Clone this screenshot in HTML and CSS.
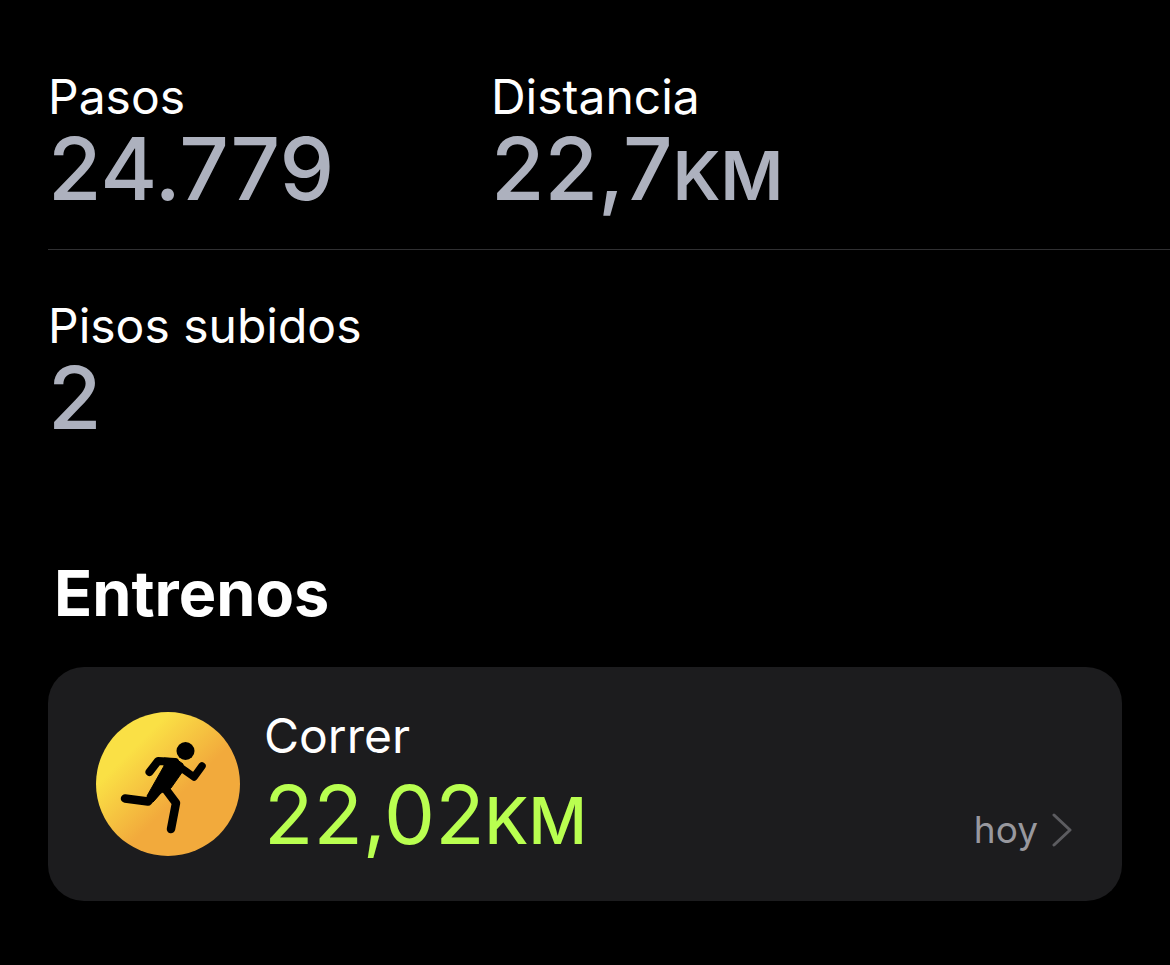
FILE: index.html
```html
<!DOCTYPE html>
<html lang="es">
  <head>
    <meta charset="UTF-8" />
    <meta name="viewport" content="width=device-width, initial-scale=1.0" />
    <title>Actividad</title>
    <link rel="stylesheet" href="styles.css">
  </head>
  <body>
    <main class="activity">
      <dl class="stats">
        <div class="stats-row">
          <div class="stat">
            <dt class="label">Pasos</dt>
            <dd class="value">24.779</dd>
          </div>
          <div class="stat">
            <dt class="label">Distancia</dt>
            <dd class="value">22,7<span class="unit">KM</span></dd>
          </div>
        </div>
        <div class="stats-row">
          <div class="stat">
            <dt class="label">Pisos subidos</dt>
            <dd class="value">2</dd>
          </div>
        </div>
      </dl>

      <section class="workouts">
        <h2>Entrenos</h2>
        <a href="#" class="workout-card">
          <svg class="workout-icon" viewBox="0 0 144 144" aria-hidden="true">
            <defs>
              <linearGradient id="badge" x1="0.15" y1="0.1" x2="0.8" y2="0.75">
                <stop offset="0.2" stop-color="#fae045" />
                <stop offset="0.7" stop-color="#f2aa3c" />
              </linearGradient>
            </defs>
            <circle cx="72" cy="72" r="72" fill="url(#badge)" />
            <circle cx="89.5" cy="39" r="9" />
            <path d="M68 46 L80 47 L87 52 L87 59 L75 76 L65 81 L57 90 L51 84 L68 54 Z" stroke="#000" stroke-width="1" stroke-linejoin="round" />
            <g fill="none" stroke="#000" stroke-width="8.5" stroke-linecap="round" stroke-linejoin="round">
              <path d="M53.5 60 L62 49 L79 50" stroke-width="8" />
              <path d="M81 53 L98 65 L106 54" stroke-width="7.5" />
              <path d="M29 86.5 L52 89.5 L66 73" />
              <path d="M68 75 L80 91 L75 117" />
            </g>
          </svg>
          <div class="workout-info">
            <div class="label">Correr</div>
            <div class="value">22,02<span class="unit">KM</span></div>
          </div>
          <div class="workout-date">
            <span>hoy</span>
            <svg class="chevron" viewBox="0 0 20 34" aria-hidden="true">
              <path d="M2 2 L18 17 L2 32" />
            </svg>
          </div>
        </a>
      </section>
    </main>
  </body>
</html>
```
FILE: styles.css
```css
:root {
  --background: #000000;
  --card-background: #1c1c1e;
  --text-color: #ffffff;
  --value-color: #adb1be;
  --workout-color: #b9ff50;
  --muted-text: #98989e;
  --chevron-color: #5c5c60;
  --separator: #303032;
}

* {
  margin: 0;
  padding: 0;
  box-sizing: border-box;
}

body {
  font-family: Inter, "Liberation Sans", sans-serif;
  background-color: var(--background);
  color: var(--text-color);
}

.activity {
  padding: 21px 0 48px 48px;
}

.stats-row {
  display: grid;
  grid-template-columns: 15fr 23fr;
  padding: 45px 0 39px;
}

.stats-row + .stats-row {
  border-top: 1px solid var(--separator);
}

.label {
  font-size: 48px;
  line-height: 62px;
}

.value {
  font-size: 87px;
  font-weight: 500;
  line-height: 82px;
  color: var(--value-color);
}

.unit {
  font-size: 68px;
  font-weight: 600;
  line-height: 1;
}

.workouts {
  padding: 77px 48px 0 0;
}

h2 {
  padding-left: 6px;
  font-size: 63px;
  font-weight: 700;
  line-height: 76px;
}

.workout-card {
  display: flex;
  align-items: flex-end;
  gap: 24px;
  margin-top: 36px;
  padding: 38px 50px 45px 48px;
  border-radius: 36px;
  background: var(--card-background);
  color: inherit;
  text-decoration: none;
}

.workout-icon {
  width: 144px;
  height: 144px;
  flex-shrink: 0;
}

.workout-info {
  flex: 1;
  display: flex;
  flex-direction: column;
  gap: 7px;
}

.workout-info .value {
  font-size: 81px;
  font-weight: 400;
  color: var(--workout-color);
}

.workout-info .unit {
  font-size: 64px;
  font-weight: 500;
}

.workout-date {
  display: flex;
  align-items: center;
  gap: 14px;
  padding-bottom: 3px;
  font-size: 37px;
  line-height: 46px;
  color: var(--muted-text);
}

.chevron {
  width: 20px;
  height: 34px;
  fill: none;
  stroke: var(--chevron-color);
  stroke-width: 3;
  stroke-linecap: round;
  stroke-linejoin: round;
}
```
